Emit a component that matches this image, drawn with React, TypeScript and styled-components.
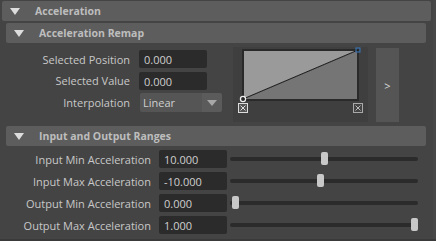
import React from "react";
import styled, { createGlobalStyle } from "styled-components";

const GlobalStyle = createGlobalStyle`
  html, body {
    margin: 0;
    padding: 0;
    background: #444444;
  }
  body {
    font-family: "Open Sans", "DejaVu Sans", sans-serif;
  }
`;

const Page = styled.div`
  width: 436px;
  height: 241px;
  background: #444444;
  position: relative;
  overflow: hidden;
  box-sizing: border-box;
  border-bottom: 2px solid #3a3a3a;
`;

const Body = styled.div`
  width: 429px;
  padding: 1px 0 0 2px;
`;

const Header = styled.div<{ $inner?: boolean }>`
  height: 20px;
  width: ${(p) => (p.$inner ? "420px" : "429px")};
  background: #5d5d5d;
  border-radius: 2px;
  display: flex;
  align-items: center;
  color: #bdbdbd;
  font-size: 10.5px;
  font-weight: 700;
`;

const Arrow = styled.span`
  width: 0;
  height: 0;
  margin: 0 15px 0 8px;
  border-left: 5px solid transparent;
  border-right: 5px solid transparent;
  border-top: 7px solid #dddddd;
`;

const Section = styled.div`
  padding: 2px 0 0 4px;
`;

const Remap = styled.div`
  display: flex;
  align-items: flex-start;
  height: 83px;
`;

const Form = styled.div`
  display: grid;
  grid-template-columns: 124px auto;
  column-gap: 9px;
  row-gap: 3.5px;
  margin-top: 7px;
  align-items: center;
`;

const Label = styled.div`
  text-align: right;
  color: #c8c8c8;
  font-size: 11px;
  white-space: nowrap;
`;

const Field = styled.div<{ $w: number }>`
  width: ${(p) => p.$w}px;
  height: 18px;
  box-sizing: border-box;
  background: #2b2b2b;
  border-radius: 2px;
  color: #cfcfcf;
  font-size: 11px;
  line-height: 19px;
  padding-left: 5px;
`;

const Select = styled.div`
  width: 82px;
  height: 19px;
  display: flex;
  margin-left: 1px;
  border-radius: 2px;
  overflow: hidden;
`;

const SelectValue = styled.div`
  flex: 1;
  background: #555555;
  color: #cfcfcf;
  font-size: 11px;
  line-height: 20px;
  padding-left: 3px;
`;

const SelectArrow = styled.div`
  width: 20px;
  background: #5b5b5b;
  display: flex;
  align-items: center;
  justify-content: center;
  &::after {
    content: "";
    border-left: 5px solid transparent;
    border-right: 5px solid transparent;
    border-top: 6px solid #a8a8a8;
  }
`;

const GraphPanel = styled.div`
  width: 135px;
  height: 75px;
  margin: 4px 0 0 11px;
  background: #3f3f3f;
`;

const SideButton = styled.div`
  width: 23px;
  height: 74px;
  margin: 5px 0 0 8px;
  background: #555555;
  color: #dddddd;
  font-size: 11px;
  display: flex;
  align-items: center;
  justify-content: center;
`;

const Ranges = styled.div`
  display: grid;
  grid-template-columns: 153px 68px 191px;
  row-gap: 4px;
  align-items: center;
  margin-top: 4px;
`;

const RangeLabel = styled(Label)`
  padding-right: 8px;
`;

const Slider = styled.div`
  position: relative;
  height: 18px;
  margin-left: 3px;
  &::before {
    content: "";
    position: absolute;
    left: 0;
    right: 0;
    top: 7px;
    height: 4px;
    border-radius: 2px;
    background: #2b2b2b;
  }
`;

const Thumb = styled.div`
  position: absolute;
  top: 2px;
  width: 7px;
  height: 13px;
  margin-left: -3.5px;
  border-radius: 2px;
  background: #c8c8c8;
`;

const ScrollStrip = styled.div`
  position: absolute;
  top: 0;
  right: 0;
  width: 3px;
  height: 100%;
  background: #474747;
`;

const Graph: React.FC = () => (
  <svg width="135" height="75" viewBox="0 0 135 75">
    <rect x="9" y="2" width="117" height="52" fill="#2a2a2a" />
    <polygon points="11,4 124,4 11,52" fill="#9a9a9a" />
    <polygon points="124,4 124,52 11,52" fill="#757575" />
    <line x1="10" y1="52" x2="125" y2="3" stroke="#1e1e1e" strokeWidth="1" />
    <circle cx="10" cy="52" r="2.6" fill="none" stroke="#eeeeee" strokeWidth="1.2" />
    <rect x="123" y="1" width="4" height="4" fill="none" stroke="#3a6fa8" strokeWidth="1.2" />
    <g>
      <rect x="5.5" y="56.5" width="9" height="9" fill="#555" stroke="#dddddd" />
      <path d="M7.5 58.5 L12.5 63.5 M12.5 58.5 L7.5 63.5" stroke="#dddddd" strokeWidth="1" />
    </g>
    <g>
      <rect x="120.5" y="56.5" width="9" height="9" fill="#444" stroke="#aaaaaa" />
      <path d="M122.5 58.5 L127.5 63.5 M127.5 58.5 L122.5 63.5" stroke="#bbbbbb" strokeWidth="1" />
    </g>
  </svg>
);

const ranges = [
  { label: "Input Min Acceleration", value: "10.000", pos: 94 },
  { label: "Input Max Acceleration", value: "-10.000", pos: 90 },
  { label: "Output Min Acceleration", value: "0.000", pos: 5 },
  { label: "Output Max Acceleration", value: "1.000", pos: 184 },
];

const App: React.FC = () => (
  <Page>
    <GlobalStyle />
    <Body>
      <Header>
        <Arrow />
        Acceleration
      </Header>
      <Section>
        <Header $inner>
          <Arrow />
          Acceleration Remap
        </Header>
        <Remap>
          <Form>
            <Label>Selected Position</Label>
            <Field $w={68}>0.000</Field>
            <Label>Selected Value</Label>
            <Field $w={68}>0.000</Field>
            <Label>Interpolation</Label>
            <Select>
              <SelectValue>Linear</SelectValue>
              <SelectArrow />
            </Select>
          </Form>
          <GraphPanel>
            <Graph />
          </GraphPanel>
          <SideButton>&gt;</SideButton>
        </Remap>
        <Header $inner>
          <Arrow />
          Input and Output Ranges
        </Header>
        <Ranges>
          {ranges.map((r) => (
            <React.Fragment key={r.label}>
              <RangeLabel>{r.label}</RangeLabel>
              <Field $w={68}>{r.value}</Field>
              <Slider>
                <Thumb style={{ left: r.pos }} />
              </Slider>
            </React.Fragment>
          ))}
        </Ranges>
      </Section>
    </Body>
    <ScrollStrip />
  </Page>
);

export default App;
